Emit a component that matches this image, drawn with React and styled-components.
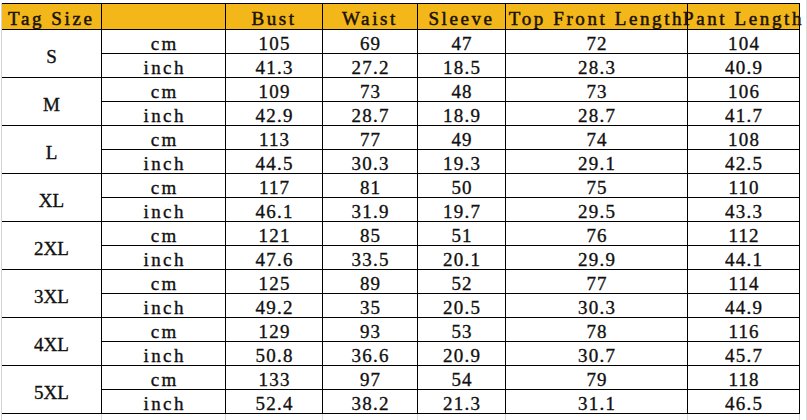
import React from "react";
import styled, { createGlobalStyle } from "styled-components";

const Global = createGlobalStyle`
  html, body { margin: 0; padding: 0; background: #fff; }
  body { font-family: "Liberation Serif", "Times New Roman", serif; color: #111; }
`;

const COLS = "99px 123px 96px 94px 87px 181px 111px";

const Page = styled.div`
  width: 806px;
  height: 420px;
  border-right: 1px solid #dcdcdc;
  overflow: hidden;
`;

const Table = styled.div`
  display: grid;
  grid-template-columns: ${COLS};
  grid-template-rows: 25px repeat(16, 23px);
  gap: 1px;
  background: #000;
  padding: 1px 1px 1px 0;
  border-left: 1px solid #d4d4d4;
  margin: 3px 0 0 1px;
  width: fit-content;
`;

const HeadCell = styled.div`
  background: #f3b71a;
  display: flex;
  align-items: flex-end;
  justify-content: ${(p) => (p.$left ? "flex-start" : "center")};
  padding: 0 0 2px ${(p) => (p.$left ? "6px" : "0")};
  font-size: 19px;
  line-height: 16px;
  letter-spacing: 2.6px;
  -webkit-text-stroke: 0.5px #1a1208;
  white-space: nowrap;
  color: #1a1208;
`;

const Cell = styled.div`
  background: #fff;
  display: flex;
  align-items: flex-end;
  justify-content: center;
  padding-bottom: 1.5px;
  font-size: 19px;
  line-height: 16px;
  letter-spacing: ${(p) => (p.$unit ? "2.4px" : "1.2px")};
  text-indent: ${(p) => (p.$unit ? "2.4px" : "1.2px")};
  -webkit-text-stroke: 0.35px #111;
  white-space: nowrap;
  color: #111;
`;

const SizeCell = styled(Cell)`
  grid-row: span 2;
  align-items: center;
  padding: 6px 0 0;
  letter-spacing: 0;
  text-indent: 0;
`;

const Gridlines = styled.div`
  display: grid;
  grid-template-columns: ${COLS};
  gap: 1px;
  background: #d9d9d9;
  padding: 0 1px 0 0;
  border-left: 1px solid #d4d4d4;
  margin-left: 1px;
  width: fit-content;
`;

const Blank = styled.div`
  background: #fff;
  height: 20px;
`;

const headers = ["Bust", "Waist", "Sleeve", "Top Front Length", "Pant Length"];

const sizes = [
  ["S", ["105", "69", "47", "72", "104"], ["41.3", "27.2", "18.5", "28.3", "40.9"]],
  ["M", ["109", "73", "48", "73", "106"], ["42.9", "28.7", "18.9", "28.7", "41.7"]],
  ["L", ["113", "77", "49", "74", "108"], ["44.5", "30.3", "19.3", "29.1", "42.5"]],
  ["XL", ["117", "81", "50", "75", "110"], ["46.1", "31.9", "19.7", "29.5", "43.3"]],
  ["2XL", ["121", "85", "51", "76", "112"], ["47.6", "33.5", "20.1", "29.9", "44.1"]],
  ["3XL", ["125", "89", "52", "77", "114"], ["49.2", "35", "20.5", "30.3", "44.9"]],
  ["4XL", ["129", "93", "53", "78", "116"], ["50.8", "36.6", "20.9", "30.7", "45.7"]],
  ["5XL", ["133", "97", "54", "79", "118"], ["52.4", "38.2", "21.3", "31.1", "46.5"]],
];

export default function App() {
  return (
    <Page>
      <Global />
      <Table>
        <HeadCell $left>Tag Size</HeadCell>
        <HeadCell />
        {headers.map((h) => (
          <HeadCell key={h}>{h}</HeadCell>
        ))}
        {sizes.map(([size, cm, inch]) => (
          <React.Fragment key={size}>
            <SizeCell>{size}</SizeCell>
            <Cell $unit>cm</Cell>
            {cm.map((v, i) => (
              <Cell key={"c" + i}>{v}</Cell>
            ))}
            <Cell $unit>inch</Cell>
            {inch.map((v, i) => (
              <Cell key={"i" + i}>{v}</Cell>
            ))}
          </React.Fragment>
        ))}
      </Table>
      <Gridlines>
        {Array.from({ length: 7 }).map((_, i) => (
          <Blank key={i} />
        ))}
      </Gridlines>
    </Page>
  );
}
